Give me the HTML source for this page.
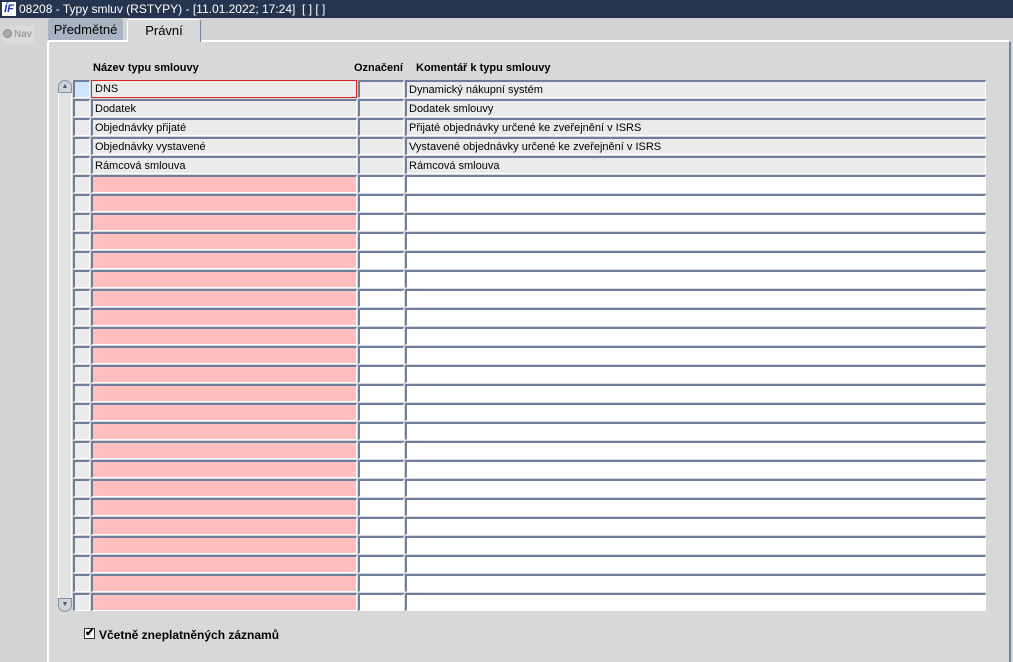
<!DOCTYPE html>
<html><head><style>
body{margin:0;width:1013px;height:646px;overflow:hidden;background:#d4d4d4;font-family:"Liberation Sans",Arial,sans-serif;position:relative}
.a{position:absolute}
.title{left:0;top:0;width:1013px;height:18px;background:#26354f;color:#fff;font-size:12px;line-height:18px;white-space:nowrap}
.cell{position:absolute;height:16px;border-top:2px solid #6e7e9c;border-left:2px solid #6e7e9c;border-right:1px solid #fff;border-bottom:1px solid #fff;box-sizing:border-box;font-size:11px;line-height:16px;padding-left:2px;white-space:nowrap;overflow:hidden;color:#000}
</style></head><body>
<div class="a title"><span style="display:inline-block;width:14px;height:14px;background:#fff;color:#1a2fd0;font-weight:bold;font-style:italic;font-size:11px;line-height:14px;margin:2px 3px 0 2px;vertical-align:top;text-align:center">ÍF</span>08208 - Typy smluv (RSTYPY) - [11.01.2022; 17:24]&nbsp; [ ] [ ]</div>
<div class="a" style="left:2px;top:26px;width:32px;height:18px;background:#dadada;font-size:10px;color:#888;line-height:18px;white-space:nowrap"><span style="display:inline-block;width:7px;height:7px;border-radius:50%;background:#aaa;border:1px solid #888;margin:0 2px 0 1px;vertical-align:-1px"></span>Nav</div>
<div class="a" style="left:48px;top:18px;width:75px;height:22px;background:#a9b3c1;border-radius:4px 4px 0 0;font-size:13px;line-height:24px;text-align:center">Předmětné</div>
<div class="a" style="left:127px;top:19px;width:72px;height:22px;background:#d8d8d8;border:1px solid #fff;border-right:1px solid #6e7e9c;border-bottom:none;border-radius:3px 3px 0 0;font-size:13px;line-height:22px;text-align:center;z-index:2">Právní</div>
<div class="a" style="left:47px;top:40px;width:960px;height:620px;background:#d8d8d8;border-top:2px solid #fff;border-left:2px solid #fff;border-right:2px solid #7486a4;border-radius:3px 3px 0 0"></div>
<div class="a" style="left:93px;top:62px;font-size:11px;font-weight:bold">Název typu smlouvy</div>
<div class="a" style="left:354px;top:62px;font-size:11px;font-weight:bold">Označení</div>
<div class="a" style="left:416px;top:62px;font-size:11px;font-weight:bold">Komentář k typu smlouvy</div>
<div class="a" style="left:58px;top:80px;width:14px;height:532px;background:#e2e2e2;border:1px solid #fff;box-sizing:border-box;border-radius:7px"></div>
<div class="a" style="left:58px;top:80px;width:14px;height:13px;background:#d0d4da;border:1px solid #8090a8;box-sizing:border-box;border-radius:7px 7px 0 0;font-size:7px;line-height:11px;text-align:center;color:#556">▲</div>
<div class="a" style="left:58px;top:598px;width:14px;height:14px;background:#d0d4da;border:1px solid #8090a8;box-sizing:border-box;border-radius:0 0 7px 7px;font-size:7px;line-height:12px;text-align:center;color:#556">▼</div>
<div id="rows"></div>
<div class="a" style="left:84px;top:628px;width:11px;height:11px;background:#fff;border:1px solid #333;box-sizing:border-box;font-size:11px;line-height:9px;text-align:center;font-weight:bold">✔</div>
<div class="a" style="left:99px;top:628px;font-size:12px;font-weight:bold">Včetně zneplatněných záznamů</div>
<script>
var d=[["DNS","Dynamický nákupní systém"],["Dodatek","Dodatek smlouvy"],["Objednávky přijaté","Přijaté objednávky určené ke zveřejnění v ISRS"],["Objednávky vystavené","Vystavené objednávky určené ke zveřejnění v ISRS"],["Rámcová smlouva","Rámcová smlouva"]];
var h="";
for(var i=0;i<28;i++){var y=80+i*19;var f=i<5;
h+='<div class="cell" style="left:73px;top:'+y+'px;width:17px;height:18px;background:'+(i==0?'#cfe4f8':'#ebebeb')+'"></div>';
h+='<div class="cell" style="left:91px;top:'+y+'px;width:266px;height:18px;background:'+(f?'#ebebeb':'#ffbfbf')+(i==0?';border:1px solid #e02020;padding-left:3px;line-height:17px':'')+'">'+(f?d[i][0]:'')+'</div>';
h+='<div class="cell" style="left:358px;top:'+y+'px;width:46px;height:18px;background:'+(f?'#ebebeb':'#fff')+'"></div>';
h+='<div class="cell" style="left:405px;top:'+y+'px;width:581px;height:18px;background:'+(f?'#ebebeb':'#fff')+'">'+(f?d[i][1]:'')+'</div>';}
document.getElementById('rows').innerHTML=h;
</script>
</body></html>
